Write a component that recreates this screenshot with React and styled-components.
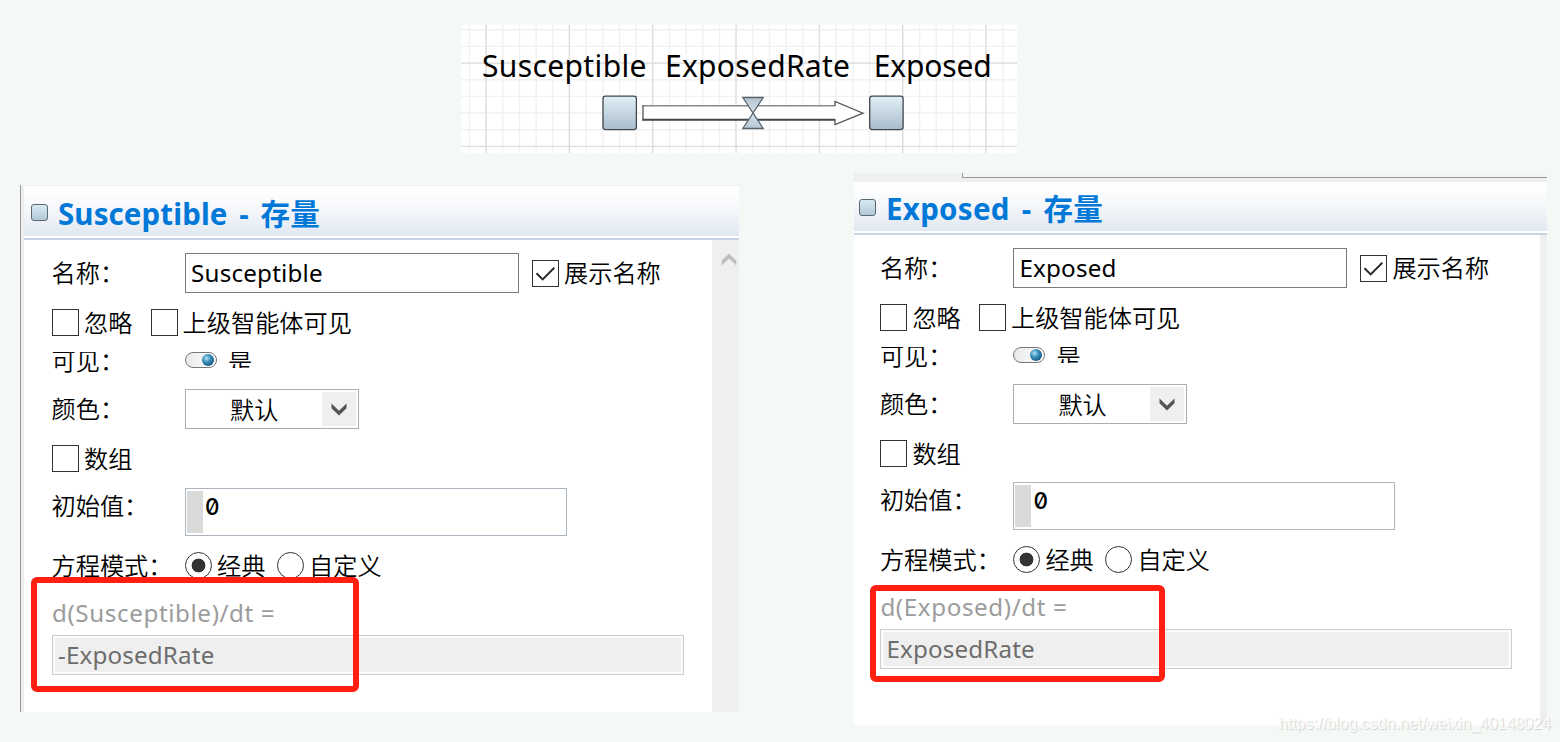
import React from "react";
import styled, { createGlobalStyle } from "styled-components";

const stocks = [
  {
    name: "Susceptible",
    formula: "-ExposedRate",
    side: "left",
    mark: { x: 7, y: 337, w: 328, h: 115 },
  },
  {
    name: "Exposed",
    formula: "ExposedRate",
    side: "right",
    mark: { x: 16, y: 350, w: 295, h: 97 },
  },
];

function lines(start, end, step) {
  const list = [];
  for (let v = start; v < end; v += step) list.push(v);
  return list;
}

function StockShape({ x, y }) {
  return (
    <rect x={x} y={y} width="33.4" height="33.4" rx="2.5" fill="url(#stockFill)" stroke="#40484e" strokeWidth="1.3" />
  );
}

function Diagram() {
  return (
    <Canvas width="556" height="128" viewBox="0 0 556 128">
      <defs>
        <linearGradient id="stockFill" x1="0" y1="0" x2="0" y2="1">
          <stop offset="0" stopColor="#e1f0f8" />
          <stop offset="1" stopColor="#a9bccb" />
        </linearGradient>
        <linearGradient id="valveFill" x1="0" y1="0" x2="0" y2="1">
          <stop offset="0" stopColor="#b3c3cf" />
          <stop offset="0.5" stopColor="#d5e2ec" />
          <stop offset="1" stopColor="#b5c6d3" />
        </linearGradient>
      </defs>
      {lines(8.5, 556, 16.67).map((x) => <line key={x} x1={x} x2={x} y1="0" y2="128" stroke="#f1f1f1" strokeWidth="1.4" />)}
      {lines(4.7, 128, 16.67).map((y) => <line key={y} y1={y} y2={y} x1="0" x2="556" stroke="#f1f1f1" strokeWidth="1.4" />)}
      {lines(25, 556, 83.33).map((x) => <line key={x} x1={x} x2={x} y1="0" y2="128" stroke="#dedede" strokeWidth="1.3" />)}
      {lines(38.2, 128, 83.1).map((y) => <line key={y} y1={y} y2={y} x1="0" x2="556" stroke="#dedede" strokeWidth="1.3" />)}
      <DiagramLabel x="21" y="51.7" textLength="164.5">Susceptible</DiagramLabel>
      <DiagramLabel x="204" y="51.7" textLength="185">ExposedRate</DiagramLabel>
      <DiagramLabel x="412.7" y="51.7" textLength="118">Exposed</DiagramLabel>
      <StockShape x="142" y="71.2" />
      <StockShape x="408.7" y="71.2" />
      <path d="M182 80.7H374V76.5L402 88.2L374 99.5V94.7H182Z" fill="#fff" />
      <path d="M182 80.7H374" stroke="#8a8a8a" strokeWidth="1.6" />
      <path d="M181.5 94.7H374" stroke="#41464a" strokeWidth="1.9" />
      <path d="M182 80V95.4M374 81V76.5L402 88.2L374 99.5V94" fill="none" stroke="#555" strokeWidth="1.3" />
      <path d="M281.8 72.5H302.2L281.8 103.5H302.2Z" fill="url(#valveFill)" stroke="#59636b" strokeWidth="1.3" />
    </Canvas>
  );
}

function Check({ checked, children }) {
  return (
    <Option>
      <Box>
        {checked && (
          <svg width="21" height="21" viewBox="0 0 21 21">
            <path d="M1.5 10.2L7.7 16.4L19.3 4.8" fill="none" stroke="#2b2b2b" strokeWidth="2" />
          </svg>
        )}
      </Box>
      {children}
    </Option>
  );
}

function Chevron({ up, color }) {
  return (
    <svg width="16" height="13" viewBox="0 0 16 13">
      <path d={up ? "M0.7 7.8V12.6L8 5.4L15.3 12.6V7.8L8 0.6Z" : "M0.5 0.6V5.2L8 12.6L15.5 5.2V0.6L8 7.8Z"} fill={color} />
    </svg>
  );
}

function Panel({ stock }) {
  return (
    <PanelFrame $side={stock.side}>
      {stock.side === "right" && <TabStrip><TabEdge /></TabStrip>}
      <Header $side={stock.side}>
        <HeaderIcon />
        <Title $side={stock.side}>{stock.name} - 存量</Title>
      </Header>
      <Body>
        <Form $side={stock.side}>
          <Row $height={40}>
            <Label>名称：</Label>
            <TextField>{stock.name}</TextField>
            <Check checked>展示名称</Check>
          </Row>
          <Row $height={27}>
            <FirstOption><Check>忽略</Check></FirstOption>
            <Check>上级智能体可见</Check>
          </Row>
          <Row $height={21}>
            <ShortLabel>可见：</ShortLabel>
            <Toggle><Knob /></Toggle>
            <ToggleText>是</ToggleText>
          </Row>
          <Row $height={40}>
            <Label>颜色：</Label>
            <Select>
              <SelectText>默认</SelectText>
              <SelectButton><Chevron color="#555" /></SelectButton>
            </Select>
          </Row>
          <Row $height={27} $gap={stock.side === "right" ? 15 : 16}>
            <Check>数组</Check>
          </Row>
          <Row $height={48}>
            <Label $top>初始值：</Label>
            <CodeField><Gutter />0</CodeField>
          </Row>
          <Row $height={27}>
            <Label>方程模式：</Label>
            <FirstRadio><Option><Radio $on />经典</Option></FirstRadio>
            <Option><Radio />自定义</Option>
          </Row>
          <Row $height={40} $gap={0}>
            <Equation>d({stock.name})/dt =</Equation>
          </Row>
          <Formula>{stock.formula}</Formula>
          <Highlight $at={stock.mark} />
        </Form>
        <ScrollBar $side={stock.side}>
          {stock.side === "left" && <Chevron up color="#bdbdbd" />}
        </ScrollBar>
      </Body>
    </PanelFrame>
  );
}

function App() {
  return (
    <Page>
      <Global />
      <Diagram />
      <Panels>
        {stocks.map((stock) => <Panel key={stock.name} stock={stock} />)}
      </Panels>
      <Watermark>https://blog.csdn.net/weixin_40148024</Watermark>
    </Page>
  );
}
export default App;

const Global = createGlobalStyle`
  * {
    box-sizing: border-box;
  }
  body {
    margin: 0;
    background: #f4f9f5;
  }
  svg {
    display: block;
  }
`;

const Page = styled.div`
  position: relative;
  width: 1560px;
  height: 742px;
  padding-top: 25px;
  overflow: hidden;
  background: #f4f9f5;
  color: #000;
  font-family: "Noto Sans", "Noto Sans CJK SC", sans-serif;
  font-size: 24.2px;
  white-space: nowrap;
`;

const Canvas = styled.svg`
  margin-left: 461px;
  background: #fff;
`;

const DiagramLabel = styled.text`
  font-family: "Noto Sans", sans-serif;
  font-size: 30px;
  fill: #000;
`;

const Panels = styled.div`
  display: flex;
  align-items: flex-start;
  padding: 20px 13px 0 20px;
  justify-content: space-between;
`;

const PanelFrame = styled.section`
  display: flex;
  flex-direction: column;
  width: ${(p) => (p.$side === "left" ? 719 : 693)}px;
  height: ${(p) => (p.$side === "left" ? 527 : 552)}px;
  margin-top: ${(p) => (p.$side === "left" ? 12 : 0)}px;
  padding-left: ${(p) => (p.$side === "left" ? 4 : 0)}px;
  background: ${(p) => (p.$side === "left" ? "linear-gradient(90deg, #999 1.3px, #efefef 1.3px, #efefef 4px, #fff 4px)" : "#fff")};
`;

const TabStrip = styled.div`
  height: 8px;
  padding-left: 108px;
  background: #efefef;
`;

const TabEdge = styled.div`
  height: 5px;
  border-left: 1px solid #999;
  border-bottom: 1px solid #999;
  background: #f4f4f4;
`;

const Header = styled.header`
  display: flex;
  align-items: center;
  height: ${(p) => (p.$side === "left" ? 55 : 54)}px;
  padding-left: ${(p) => (p.$side === "left" ? 7 : 5)}px;
  border-top: 1px solid #efefef;
  border-bottom: 2px solid #c6d4e7;
  background: linear-gradient(#fff 10%, #f5f7fa 45%, #e1e8f2 96%, #fff 97%);
`;

const HeaderIcon = styled.span`
  width: 17px;
  height: 17px;
  border: 1.5px solid #5c6870;
  border-radius: 3px;
  background: linear-gradient(#d9eaf4, #b2c8d8);
`;

const Title = styled.h1`
  margin: ${(p) => (p.$side === "left" ? 4 : 2)}px 0 0 10px;
  color: #0078d7;
  font-size: 29.5px;
  font-weight: 700;
  letter-spacing: ${(p) => (p.$side === "left" ? 0.1 : 0.3)}px;
  word-spacing: 4px;
  line-height: 40px;
`;

const Body = styled.div`
  display: flex;
  flex: 1;
`;

const Form = styled.div`
  position: relative;
  flex: 1;
  padding: 13px 0 0 ${(p) => (p.$side === "left" ? 28 : 26.4)}px;
`;

const Row = styled.div`
  display: flex;
  align-items: center;
  height: ${(p) => p.$height}px;
  margin-bottom: ${(p) => p.$gap ?? 16}px;
  line-height: 36px;
`;

const Label = styled.span`
  width: 133px;
  flex: none;
  margin-left: -0.5px;
  margin-right: 0.5px;
  font-weight: 350;
  align-self: ${(p) => (p.$top ? "flex-start" : "center")};
`;

const ShortLabel = styled(Label)`
  align-self: flex-start;
  height: 23px;
  overflow: hidden;
  line-height: 17px;
`;

const TextField = styled.div`
  width: 334px;
  height: 40px;
  margin-right: 13px;
  padding-left: 5px;
  border: 1.4px solid #7a7a7a;
  background: #fff;
  letter-spacing: 0.2px;
  line-height: 38px;
`;

const Option = styled.label`
  display: flex;
  align-items: center;
  gap: 5px;
  font-weight: 350;
`;

const Box = styled.span`
  display: flex;
  align-items: center;
  justify-content: center;
  width: 27px;
  height: 27px;
  border: 1.4px solid #333;
  background: #fff;
`;

const FirstOption = styled.div`
  width: 98.6px;
`;

const FirstRadio = styled.div`
  width: 92px;
`;

const Toggle = styled.span`
  display: flex;
  align-items: center;
  justify-content: flex-end;
  align-self: flex-start;
  width: 32px;
  height: 16px;
  padding-right: 2px;
  border: 1.4px solid #777;
  border-radius: 8px;
  background: linear-gradient(90deg, #e9e9e9, #fff);
`;

const Knob = styled.span`
  width: 12px;
  height: 12px;
  border-radius: 50%;
  background: radial-gradient(circle at 38% 35%, #b8e4f5 0, #3c93bd 35%, #155a85 75%, #0c4368 100%);
`;

const ToggleText = styled.span`
  align-self: flex-start;
  height: 16px;
  margin-left: 11px;
  overflow: hidden;
  font-weight: 350;
  line-height: 19px;
`;

const Select = styled.div`
  display: flex;
  width: 174px;
  height: 40px;
  padding: 2px;
  border: 1.4px solid #acacb2;
  background: #fff;
`;

const SelectText = styled.span`
  flex: 1;
  padding-left: 42px;
  font-weight: 350;
`;

const SelectButton = styled.span`
  display: flex;
  align-items: center;
  justify-content: center;
  width: 34px;
  background: #efefef;
`;

const CodeField = styled.div`
  display: flex;
  width: 382px;
  height: 48px;
  padding: 2px 0 2px 1px;
  border: 1.4px solid #abb5c0;
  background: #fff;
  font-family: "Inter", sans-serif;
  font-size: 22.5px;
  font-weight: 500;
  font-feature-settings: "zero";
  line-height: 32px;
`;

const Gutter = styled.span`
  width: 16px;
  margin-right: 2px;
  background: #dadada;
`;

const Radio = styled.span`
  width: 27px;
  height: 27px;
  border: 1.4px solid #333;
  border-radius: 50%;
  background: ${(p) => (p.$on ? "radial-gradient(circle, #333 6.6px, #fff 7.2px)" : "#fff")};
`;

const Equation = styled.span`
  margin-top: -4px;
  color: #9c9c9c;
  letter-spacing: 0.6px;
`;

const Formula = styled.div`
  width: 632px;
  height: 40px;
  padding-left: 5px;
  border: 1px solid #ccc;
  box-shadow: inset 0 0 0 2px #fbfbfb;
  background: #efefef;
  color: #6d6d6d;
  letter-spacing: 0.15px;
  line-height: 38px;
`;

const Highlight = styled.div`
  position: absolute;
  left: ${(p) => p.$at.x}px;
  top: ${(p) => p.$at.y}px;
  width: ${(p) => p.$at.w}px;
  height: ${(p) => p.$at.h}px;
  border: 6px solid #ff1f10;
  border-radius: 6px;
`;

const ScrollBar = styled.div`
  display: flex;
  justify-content: center;
  width: ${(p) => (p.$side === "left" ? 27 : 7)}px;
  padding: 13px 0 0 6px;
  background: #efefef;
`;

const Watermark = styled.div`
  position: absolute;
  right: 9px;
  bottom: 9px;
  color: #fcfcfc;
  text-shadow: 1px 1px 1px #d0d0d0;
  font-family: "Liberation Sans", sans-serif;
  font-size: 16px;
  line-height: 18px;
`;
